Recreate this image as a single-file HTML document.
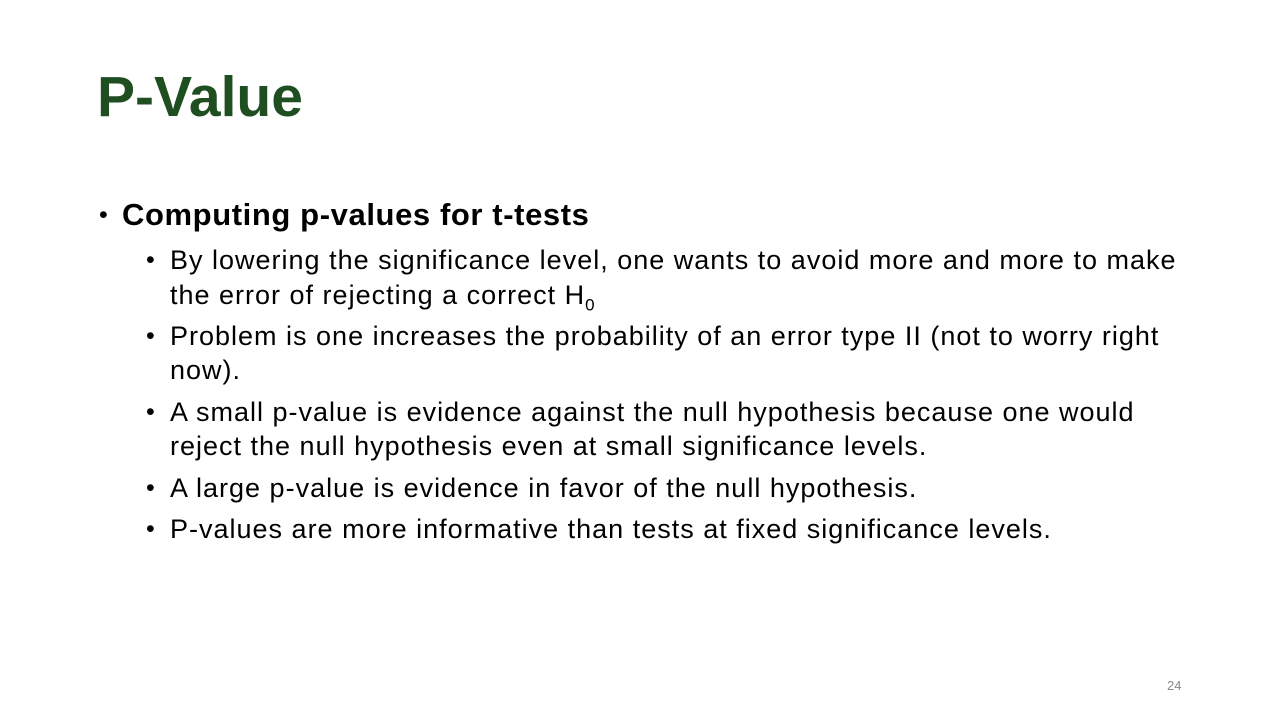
<!DOCTYPE html>
<html><head><meta charset="utf-8"><style>
body{margin:0;width:1280px;height:720px;background:#fff;position:relative;overflow:hidden;font-family:"Liberation Sans",sans-serif;color:#000}
.t{position:absolute;left:97px;top:67px;font-size:57px;font-weight:bold;color:#1f4e20;line-height:60px}
.l{position:absolute;white-space:nowrap;line-height:30px;font-size:27px;letter-spacing:1px}
.b{position:absolute;font-size:25px;line-height:30px}
.h{font-size:31px;font-weight:bold;letter-spacing:0.6px}
.n{position:absolute;left:1167px;top:678px;font-size:13px;color:#8a8a8a}
</style></head><body>
<div class="t">P-Value</div>
<div class="b" style="left:99px;top:200px">•</div>
<div class="l h" style="left:122px;top:200px">Computing p-values for t-tests</div>
<div class="b" style="left:146px;top:245px">•</div>
<div class="l" style="left:170px;top:245px">By lowering the significance level, one wants to avoid more and more to make</div>
<div class="l" style="left:170px;top:280px">the error of rejecting a correct H<sub style="font-size:17px">0</sub></div>
<div class="b" style="left:146px;top:321px">•</div>
<div class="l" style="left:170px;top:321px">Problem is one increases the probability of an error type II (not to worry right</div>
<div class="l" style="left:170px;top:355px">now).</div>
<div class="b" style="left:146px;top:397px">•</div>
<div class="l" style="left:170px;top:397px">A small p-value is evidence against the null hypothesis because one would</div>
<div class="l" style="left:170px;top:431px">reject the null hypothesis even at small significance levels.</div>
<div class="b" style="left:146px;top:473px">•</div>
<div class="l" style="left:170px;top:473px">A large p-value is evidence in favor of the null hypothesis.</div>
<div class="b" style="left:146px;top:514px">•</div>
<div class="l" style="left:170px;top:514px">P-values are more informative than tests at fixed significance levels.</div>
<div class="n">24</div>
</body></html>
